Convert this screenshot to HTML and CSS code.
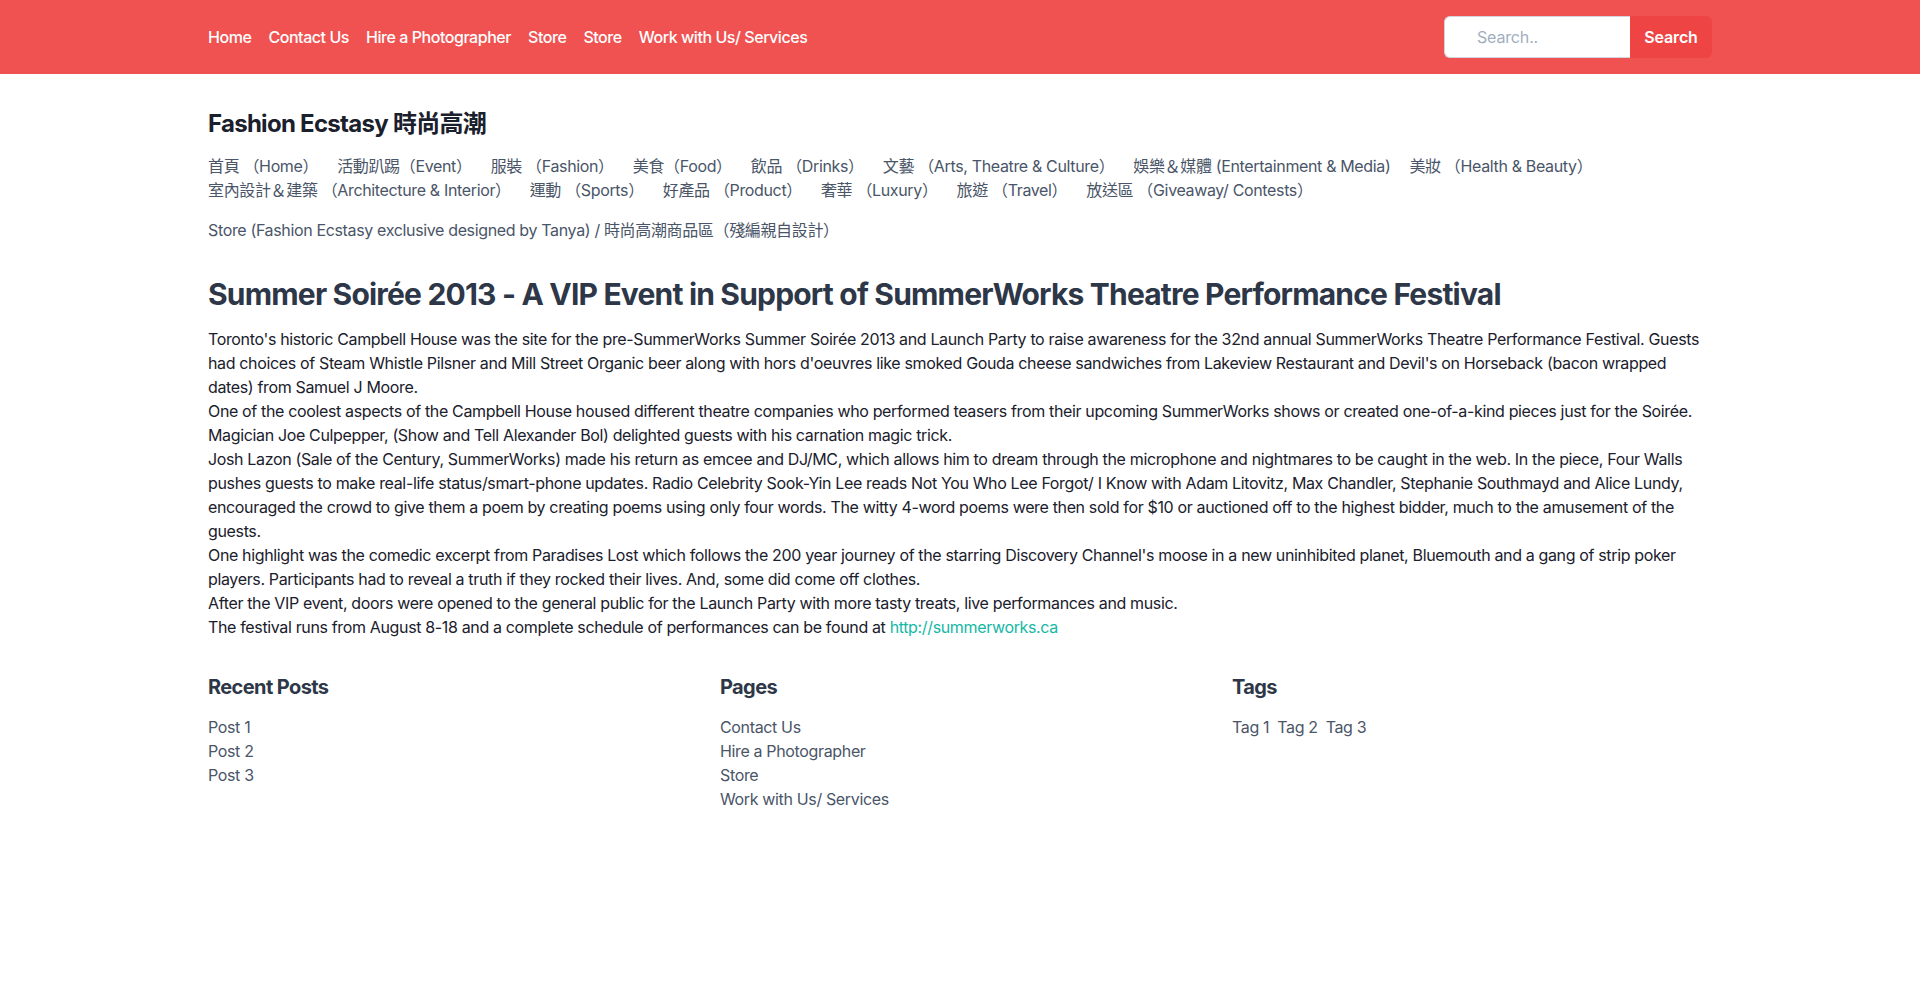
FILE: index.html
```html
<!DOCTYPE html>
<html lang="en">
<head>
<meta charset="utf-8">
<title>Fashion Ecstasy 時尚高潮</title>
<link rel="stylesheet" href="styles.css">
</head>
<body>
<nav class="topbar">
  <div class="container topbar-inner">
    <ul class="nav-links">
      <li><a href="#">Home</a></li>
      <li><a href="#">Contact Us</a></li>
      <li><a href="#">Hire a Photographer</a></li>
      <li><a href="#">Store</a></li>
      <li><a href="#">Store</a></li>
      <li><a href="#">Work with Us/ Services</a></li>
    </ul>
    <form class="search">
      <input class="search-input" type="text" placeholder="Search..">
      <button class="search-btn" type="button">Search</button>
    </form>
  </div>
</nav>

<main class="container main">
  <h2 class="site-title">Fashion Ecstasy 時尚高潮</h2>
  <div class="cats">
    <a href="#">首頁 （Home）</a>
    <a href="#">活動趴踢（Event）</a>
    <a href="#">服裝 （Fashion）</a>
    <a href="#">美食（Food）</a>
    <a href="#">飲品 （Drinks）</a>
    <a href="#">文藝 （Arts, Theatre &amp; Culture）</a>
    <a href="#">娛樂＆媒體 (Entertainment &amp; Media)</a>
    <a href="#">美妝 （Health &amp; Beauty）</a>
    <a href="#">室內設計＆建築 （Architecture &amp; Interior）</a>
    <a href="#">運動 （Sports）</a>
    <a href="#">好產品 （Product）</a>
    <a href="#">奢華 （Luxury）</a>
    <a href="#">旅遊 （Travel）</a>
    <a href="#">放送區 （Giveaway/ Contests）</a>
  </div>
  <p class="store-line">Store (Fashion Ecstasy exclusive designed by Tanya) / 時尚高潮商品區（殘編親自設計）</p>

  <article class="post">
    <h1 class="post-title">Summer Soirée 2013 - A VIP Event in Support of SummerWorks Theatre Performance Festival</h1>
    <div class="post-body">
      <p>Toronto's historic Campbell House was the site for the pre-SummerWorks Summer Soirée 2013 and Launch Party to raise awareness for the 32nd annual SummerWorks Theatre Performance Festival. Guests had choices of Steam Whistle Pilsner and Mill Street Organic beer along with hors d'oeuvres like smoked Gouda cheese sandwiches from Lakeview Restaurant and Devil's on Horseback (bacon wrapped dates) from Samuel J Moore.</p>
      <p>One of the coolest aspects of the Campbell House housed different theatre companies who performed teasers from their upcoming SummerWorks shows or created one-of-a-kind pieces just for the Soirée. Magician Joe Culpepper, (Show and Tell Alexander Bol) delighted guests with his carnation magic trick.</p>
      <p>Josh Lazon (Sale of the Century, SummerWorks) made his return as emcee and DJ/MC, which allows him to dream through the microphone and nightmares to be caught in the web. In the piece, Four Walls pushes guests to make real-life status/smart-phone updates. Radio Celebrity Sook-Yin Lee reads Not You Who Lee Forgot/ I Know with Adam Litovitz, Max Chandler, Stephanie Southmayd and Alice Lundy, encouraged the crowd to give them a poem by creating poems using only four words. The witty 4-word poems were then sold for $10 or auctioned off to the highest bidder, much to the amusement of the guests.</p>
      <p>One highlight was the comedic excerpt from Paradises Lost which follows the 200 year journey of the starring Discovery Channel's moose in a new uninhibited planet, Bluemouth and a gang of strip poker players. Participants had to reveal a truth if they rocked their lives. And, some did come off clothes.</p>
      <p>After the VIP event, doors were opened to the general public for the Launch Party with more tasty treats, live performances and music.</p>
      <p>The festival runs from August 8-18 and a complete schedule of performances can be found at <a class="link" href="#">http://summerworks.ca</a></p>
    </div>
  </article>

  <section class="widgets">
    <div class="widget">
      <h3 class="widget-title">Recent Posts</h3>
      <ul class="widget-list">
        <li><a href="#">Post 1</a></li>
        <li><a href="#">Post 2</a></li>
        <li><a href="#">Post 3</a></li>
      </ul>
    </div>
    <div class="widget">
      <h3 class="widget-title">Pages</h3>
      <ul class="widget-list">
        <li><a href="#">Contact Us</a></li>
        <li><a href="#">Hire a Photographer</a></li>
        <li><a href="#">Store</a></li>
        <li><a href="#">Work with Us/ Services</a></li>
      </ul>
    </div>
    <div class="widget">
      <h3 class="widget-title">Tags</h3>
      <div class="tags">
        <a href="#">Tag 1</a>
        <a href="#">Tag 2</a>
        <a href="#">Tag 3</a>
      </div>
    </div>
  </section>
</main>
</body>
</html>
```

FILE: styles.css
```css
* { box-sizing: border-box; }
html, body { margin: 0; padding: 0; }
body {
  font-family: Inter, "Noto Sans CJK TC", sans-serif;
  font-size: 16px;
  line-height: 24px;
  letter-spacing: -0.022em;
  color: #2d3748;
  background: #fff;
}
a { color: inherit; text-decoration: none; }
ul { list-style: none; margin: 0; padding: 0; }
h1, h2, h3, p { margin: 0; }

.container {
  max-width: 1536px;
  margin: 0 auto;
  padding: 0 16px;
}

.topbar { background: #f05252; height: 74px; }
.topbar-inner {
  height: 100%;
  display: flex;
  align-items: center;
  justify-content: space-between;
}
.nav-links { display: flex; gap: 17px; }
.nav-links a {
  color: #fff;
  font-weight: 500;
  font-size: 16px;
  letter-spacing: -0.028em;
}

.search { display: flex; height: 42px; }
.search-input {
  width: 186px;
  border: 1px solid #d2d6dc;
  border-right: none;
  border-radius: 6px 0 0 6px;
  padding: 0 16px 0 32px;
  font-family: Inter, sans-serif;
  font-size: 16px;
  letter-spacing: -0.01em;
  color: #2d3748;
  outline: none;
}
.search-input::placeholder { color: #a0aec0; }
.search-btn {
  width: 82px;
  border: none;
  background: #ef4444;
  color: #fff;
  font-family: Inter, sans-serif;
  font-weight: 600;
  font-size: 16px;
  letter-spacing: -0.01em;
  border-radius: 0 6px 6px 0;
  padding: 0;
}

.main { padding-top: 34px; padding-bottom: 80px; }
.site-title {
  font-size: 24px;
  line-height: 32px;
  font-weight: 700;
  letter-spacing: -0.03em;
  color: #1a202c;
}
.cats {
  margin-top: 14px;
  color: #4a5568;
  display: flex;
  flex-wrap: wrap;
  column-gap: 19px;
}
.store-line { margin-top: 16px; color: #4a5568; }

.post { margin-top: 34px; }
.post-title {
  font-size: 30px;
  line-height: 36px;
  font-weight: 700;
  letter-spacing: -0.027em;
  color: #2d3748;
}
.post-body { margin-top: 15px; color: #1a202c; }
.link { color: #14b8a6; }

.widgets {
  margin-top: 34px;
  display: grid;
  grid-template-columns: repeat(3, 1fr);
  gap: 32px;
}
.widget-title {
  font-size: 20px;
  line-height: 28px;
  font-weight: 700;
  letter-spacing: -0.03em;
  color: #2d3748;
}
.widget-list { margin-top: 14px; color: #4a5568; }
.tags { margin-top: 14px; display: flex; gap: 8px; color: #4a5568; }
```
